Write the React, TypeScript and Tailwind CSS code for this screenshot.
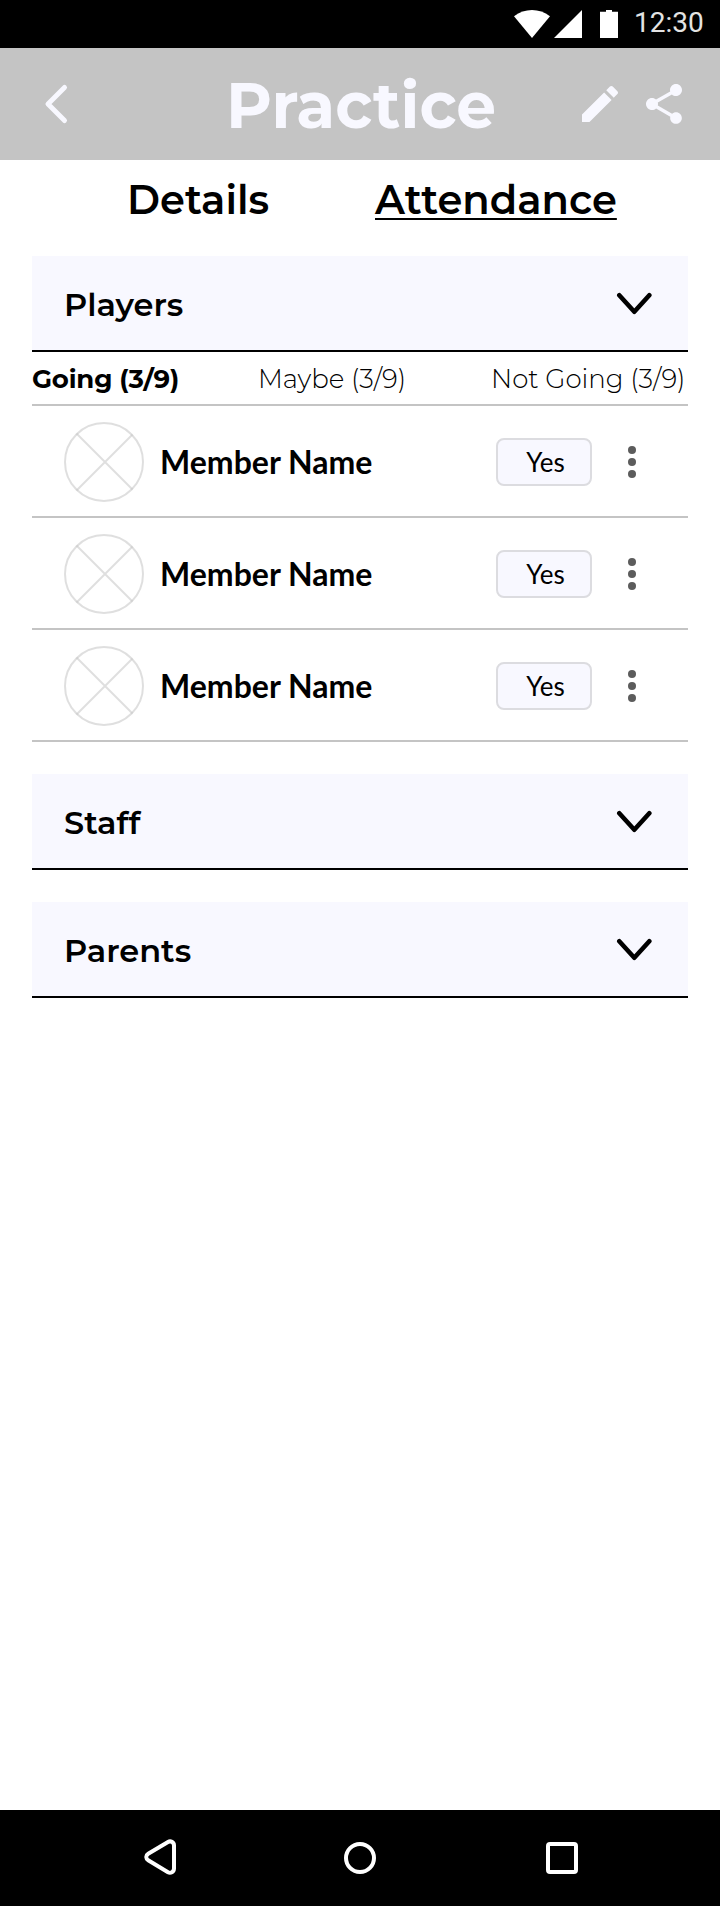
import type { ReactNode } from "react";

const display = "font-['Montserrat','Inter',sans-serif]";

function StatusBar() {
  return (
    <div className="flex h-12 items-start justify-end bg-black pr-4">
      <svg className="mt-[10px] h-7 w-[104px]" viewBox="0 0 104 28" fill="#fff">
        <path d="M0 6.2C5.4 2.1 11.6 0 18 0s12.600 2.100 18 6.200L18 28z" />
        <path d="M40 28L68 0v28z" />
        <path d="M86 1.800h6V0h6v1.800h6V28H86z" />
      </svg>
      <span className="ml-4 mt-[6px] w-[70px] whitespace-nowrap font-['Roboto',sans-serif] text-[28px] leading-[34px] text-[#e3e3e3]">
        12:30
      </span>
    </div>
  );
}

function Header() {
  return (
    <header className="flex h-28 items-center justify-between bg-[#c4c4c4] px-8 text-[#f8f8ff]">
      <svg className="h-12 w-12" viewBox="0 0 48 48" fill="none" stroke="currentColor" strokeWidth="5" strokeLinecap="round" strokeLinejoin="round">
        <path d="M32.500 7.500L16 24l16.500 16.500" />
      </svg>
      <h1 className={`${display} ml-[66px] mt-1 text-[63px] font-bold leading-[80px]`}>Practice</h1>
      <div className="flex gap-4">
        <svg className="h-12 w-12" viewBox="0 0 24 24" fill="currentColor">
          <path d="M3 17.250V21h3.750L17.810 9.940l-3.750-3.750L3 17.250zM20.710 7.040c.39-.39.39-1.020 0-1.410l-2.340-2.340c-.39-.39-1.020-.39-1.410 0l-1.830 1.830 3.750 3.750 1.830-1.830z" />
        </svg>
        <svg className="h-12 w-12" viewBox="0 0 24 24" fill="currentColor">
          <path d="M18 16.080c-.76 0-1.440.3-1.960.77L8.910 12.700c.05-.23.09-.46.09-.7s-.04-.47-.09-.7l7.050-4.110c.54.5 1.250.81 2.040.81 1.660 0 3-1.340 3-3s-1.340-3-3-3-3 1.340-3 3c0 .24.04.47.09.7L8.040 9.810C7.500 9.310 6.790 9 6 9c-1.660 0-3 1.340-3 3s1.340 3 3 3c.79 0 1.500-.31 2.040-.81l7.120 4.160c-.05.21-.08.43-.08.65 0 1.610 1.310 2.920 2.920 2.920 1.610 0 2.920-1.310 2.920-2.920s-1.310-2.920-2.920-2.920z" />
        </svg>
      </div>
    </header>
  );
}

function SectionHeader({ children }: { children: ReactNode }) {
  return (
    <div className="flex h-24 items-center justify-between border-b-2 border-black bg-[#f8f8ff] pl-8 pr-[34px] pt-[2px]">
      <h2 className={`${display} mt-[2px] text-[32px] font-semibold leading-10`}>{children}</h2>
      <svg className="h-6 w-10" viewBox="0 0 40 24" fill="none" stroke="currentColor" strokeWidth="4.600" strokeLinecap="round" strokeLinejoin="round">
        <path d="M5.300 3.200L20.300 19.700L35.300 3.200" />
      </svg>
    </div>
  );
}

function MemberRow() {
  return (
    <li className="flex h-28 items-center border-b-2 border-[#c4c4c4] pl-8 pt-[2px]">
      <svg className="h-20 w-20" viewBox="0 0 80 80" fill="none" stroke="#c4c4c4" strokeOpacity="0.550" strokeWidth="2">
        <circle cx="40" cy="40" r="39" />
        <path d="M12.500 11.500l56 56M68.500 12.500l-56 56" />
      </svg>
      <span className="ml-4 flex-1 font-['Lato',sans-serif] text-[32px] font-bold leading-10">Member Name</span>
      <button className="h-12 w-24 rounded-lg border-2 border-[#dcdce0] bg-[#f8f8ff] pl-[3px] font-['Lato',sans-serif] text-[26px] leading-8">
        Yes
      </button>
      <svg className="ml-9 mr-[52px] h-8 w-2" viewBox="0 0 8 32" fill="#5c5c5c">
        <circle cx="4" cy="4" r="4" />
        <circle cx="4" cy="16" r="4" />
        <circle cx="4" cy="28" r="4" />
      </svg>
    </li>
  );
}

function NavBar() {
  return (
    <nav className="flex h-24 items-center justify-between bg-black pl-[144px] pr-[142px]">
      <svg className="mb-[2px] h-9 w-8" viewBox="0 0 32 36" fill="none" stroke="#fff" strokeWidth="4">
        <path d="M30 6.400C30 3 26.500 1.500 24 3L4.200 14.700C1.600 16.200 1.600 19.600 4.200 21.200L24 33.200C26.500 34.600 30 33 30 29.600Z" />
      </svg>
      <div className="mr-[2px] h-8 w-8 rounded-full border-4 border-white" />
      <div className="h-8 w-8 rounded border-4 border-white" />
    </nav>
  );
}

export default function App() {
  return (
    <div className="flex h-[1906px] w-[720px] flex-col bg-white text-black">
      <StatusBar />
      <Header />
      <div className={`${display} flex h-24 pl-[127px] pt-4 text-[40px] font-semibold leading-[48px]`}>
        <span className="w-[248px]">Details</span>
        <span className="underline decoration-2 underline-offset-[4px]">Attendance</span>
      </div>
      <main className="flex-1 px-8">
        <section className="mb-8">
          <SectionHeader>Players</SectionHeader>
          <div className={`${display} flex h-[54px] border-b-2 border-[#c4c4c4] pt-[11px] text-[26px] font-light leading-8`}>
            <span className="w-[226px] font-bold tracking-[-0.2px]">Going (3/9)</span>
            <span className="w-[233px]">Maybe (3/9)</span>
            <span className="whitespace-nowrap">Not Going (3/9)</span>
          </div>
          <ul>
            <MemberRow />
            <MemberRow />
            <MemberRow />
          </ul>
        </section>
        <section className="mb-8">
          <SectionHeader>Staff</SectionHeader>
        </section>
        <section>
          <SectionHeader>Parents</SectionHeader>
        </section>
      </main>
      <NavBar />
    </div>
  );
}
